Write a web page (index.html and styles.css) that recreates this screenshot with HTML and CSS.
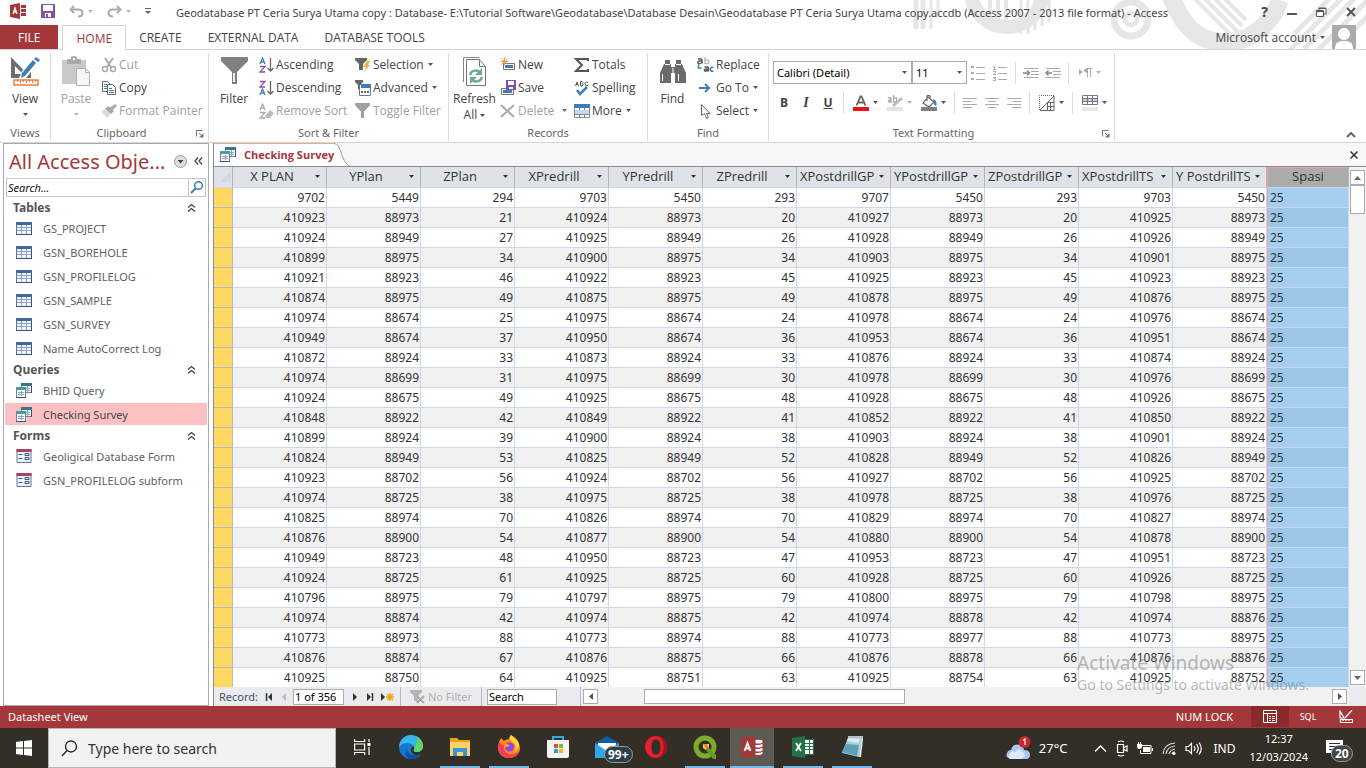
FILE: index.html
```html
<!DOCTYPE html>
<html lang="en">
<head>
  <meta charset="UTF-8">
  <meta name="viewport" content="width=device-width, initial-scale=1.0">
  <title>Geodatabase PT Ceria Surya Utama copy - Access</title>
  <link rel="stylesheet" href="styles.css">
</head>
<body>
  <!-- shared icons -->
  <svg class="sprite" width="0" height="0">
    <symbol id="caret" viewBox="0 0 5 3"><path d="M0 0h5L2.500 3z" fill="currentColor"/></symbol>
    <symbol id="fold" viewBox="0 0 9 9"><path d="M1 4.500l3.500-3 3.500 3M1 8.500l3.500-3 3.500 3" fill="none" stroke="#444" stroke-width="1.300"/></symbol>
    <symbol id="launch" viewBox="0 0 8 8"><path d="M.5 6.500v-6h6M3 3l3 3" fill="none" stroke="#777"/><path d="M7.500 3v4.500H3z" fill="#777"/></symbol>
    <symbol id="funnel" viewBox="0 0 28 28"><path d="M0 0h28v4L17 16v12h-6V16L0 4z" fill="currentColor"/></symbol>
    <symbol id="table" viewBox="0 0 16 13"><path fill="#f4f7fc" stroke="#5b7195" d="M.5.5h15v12H.5z"/><path fill="#41699f" d="M0 0h16v3H0z"/><path stroke="#8ca3c5" d="M1 5.500h14M1 8.500h14M5.500 3v9M10.500 3v9"/><path stroke="#33517c" d="M0 12.500h16M15.500 3v10"/></symbol>
    <symbol id="query" viewBox="0 0 16 15"><path fill="#fff" stroke="#6c8797" d="M5.500.5h10v9h-10z"/><path fill="#39788a" d="M5 0h11v3H5z"/><path stroke="#8fa6bd" d="M7 5.500h7M7 7.500h7M11.500 3v6"/><path fill="#f7fafc" stroke="#6c8797" d="M.5 5.500h9v9h-9z"/><path fill="#4a99a0" d="M0 4h10v3H0z"/><path stroke="#8fa6bd" d="M2 9.500h6M2 11.500h6M5.500 8v5"/><path stroke="#33517c" d="M0 14.500h10M15.500 3v7"/></symbol>
    <symbol id="form" viewBox="0 0 15 14"><path fill="#eef1fb" stroke="#6478a0" d="M.5.5h14v13H.5z"/><path fill="#a8405f" d="M0 0h15v3H0z"/><path stroke="#4a5a85" fill="none" d="M2 5.500h4M2 9.500h4M8.500 4.500h4v2h-4zM8.500 8.500h4v2h-4z"/></symbol>
  </svg>

  <header class="titlebar">
    <svg class="art" width="456" height="49" viewBox="0 0 456 49">
      <g fill="none" stroke="#e6e6e6">
        <path stroke-width="5" d="M6 0v29M13 0v29"/>
        <path stroke-width="3" d="M21 0v29M28 0v18M111 0v34M118 0v34M125 0v30M132 0v26M139 0v22"/>
        <circle cx="97" cy="-9" r="36" stroke-width="14"/>
        <path stroke-width="4" d="M80 0v28M88 0v30M96 0v31"/>
        <circle cx="221" cy="19" r="17" stroke-width="7"/>
        <circle cx="221" cy="19" r="6" stroke-width="5"/>
        <path stroke-width="18" d="M256-16c10 28 22 54 52 58 26 4 52-14 62-42"/>
        <path stroke-width="4" d="M284-2l38 38M294-2l34 34M304-2l28 28M314-2l22 22"/>
        <path stroke-width="5" d="M384 34l40-40M378 52l58-58M394 49l54-54M408 50l50-50M422 52l36-36"/>
      </g>
    </svg>
    <div class="quick">
      <svg width="17" height="16" viewBox="0 0 17 16"><path fill="#a4373a" d="M0 2l10-2v16L0 14z"/><path fill="#a4373a" d="M11 2h5v3h-5zM11 6h5v3h-5zM11 10h5v3h-5z"/><path d="M3 11l2-6 2 6M3.500 9h3" stroke="#fff" stroke-width="1.300" fill="none"/></svg>
      <button aria-label="Save"><svg width="14" height="14" viewBox="0 0 14 14"><path fill="#8652a8" d="M0 0h14v14H0z"/><path fill="#fff" d="M2 1h10v6H2zM4 9h6v4H4z"/><path fill="#8652a8" d="M5 10h2v3H5z"/></svg></button>
      <button class="off" aria-label="Undo"><svg width="15" height="13" viewBox="0 0 15 13"><path d="M5 1L1.500 4.500 5 8M2 4.500h7c6 0 6 7 0 7" fill="none" stroke="#aaa" stroke-width="2"/></svg><svg class="caret"><use href="#caret"/></svg></button>
      <button class="off" aria-label="Redo"><svg width="15" height="13" viewBox="0 0 15 13"><path d="M10 1l3.500 3.500L10 8M13 4.500H6c-6 0-6 7 0 7" fill="none" stroke="#aaa" stroke-width="2"/></svg><svg class="caret"><use href="#caret"/></svg></button>
      <button aria-label="Customize toolbar"><svg width="6" height="7" viewBox="0 0 6 7"><path d="M0 .5h6" stroke="#666"/><path d="M0 3h6L3 6z" fill="#666"/></svg></button>
    </div>
    <h1>Geodatabase PT Ceria Surya Utama copy : Database- E:\Tutorial Software\Geodatabase\Database Desain\Geodatabase PT Ceria Surya Utama copy.accdb (Access 2007 - 2013 file format) - Access</h1>
    <div class="winbtns">
      <button class="help">?</button>
      <button aria-label="Minimize"><svg width="10" height="10" viewBox="0 0 10 10"><path d="M0 7h10" stroke="#555" stroke-width="2"/></svg></button>
      <button aria-label="Restore"><svg width="11" height="10" viewBox="0 0 11 10"><path d="M.5 3.500h7v6h-7zM3 3V1h7v6H8M.5 4.500h7M3 1.500h7" fill="none" stroke="#555"/></svg></button>
      <button aria-label="Close"><svg width="10" height="10" viewBox="0 0 10 10"><path d="M1 1l8 8M9 1L1 9" stroke="#555" stroke-width="2"/></svg></button>
    </div>
  </header>

  <nav class="tabs">
    <a class="file" href="#">FILE</a>
    <a class="active" href="#">HOME</a>
    <a href="#">CREATE</a>
    <a href="#">EXTERNAL DATA</a>
    <a href="#">DATABASE TOOLS</a>
    <button class="account">Microsoft account <svg class="caret"><use href="#caret"/></svg>
      <svg width="24" height="24" viewBox="0 0 24 24"><path fill="#ababab" d="M0 0h24v24H0z"/><circle cx="12" cy="9" r="6" fill="#fff"/><path fill="#fff" d="M3 24c0-6 3-8 9-8s9 2 9 8z"/></svg>
    </button>
  </nav>

  <section class="ribbon">
    <div class="group views">
      <div class="tools">
        <button class="big">
          <svg width="30" height="30" viewBox="0 0 30 30"><path fill="#6d6d6d" fill-rule="evenodd" d="M1 1l20 21H1zM5 10v8h8z"/><path fill="#fff" d="M1 22h8l3-7L26 0h4v6L18 22z"/><path fill="#6d6d6d" d="M1 18h8v4H1zM16 22l5-6v6z"/><path fill="#3f7cb8" d="M23 4l3 3-11 13-4 2 1-5zM24 3l2-2 4 3-2 2z"/><path fill="#fff" stroke="#ed7d31" stroke-width="1.500" d="M4 24h24v5H4z"/><path stroke="#ed7d31" d="M7.500 24v2M10.500 24v3M13.500 24v2M16.500 24v3M19.500 24v2M22.500 24v3M25.500 24v2"/></svg>
          View<svg class="caret"><use href="#caret"/></svg>
        </button>
      </div>
      <p>Views</p>
    </div>

    <div class="group clipboard">
      <div class="tools">
        <button class="big off">
          <svg width="30" height="30" viewBox="0 0 30 30"><path fill="#c9c9c9" d="M1 4h24v24H1z"/><path fill="#aaa" d="M6 3h4V1q3-2 6 0v2h4v5H6z"/><path fill="#fff" d="M12 2h2v2h-2z"/><path fill="#f8f4f8" stroke="#b0b0b0" d="M15.500 12.500h9l4 4v13h-13z"/><path fill="none" stroke="#b0b0b0" d="M24.500 12.500v4h4"/></svg>
          Paste<svg class="caret"><use href="#caret"/></svg>
        </button>
        <div class="stack">
          <button class="off"><svg width="16" height="16" viewBox="0 0 16 16"><g fill="none" stroke="#aaa"><path stroke-width="2" d="M4 1l6 9M12 1L6 10"/><circle cx="4" cy="12" r="2.500" stroke-width="1.500"/><circle cx="12" cy="12" r="2.500" stroke-width="1.500"/></g></svg>Cut</button>
          <button><svg width="16" height="16" viewBox="0 0 16 16"><g fill="#fff" stroke="#666"><path d="M1.500 1.500h5l3 3v7h-8z"/><path d="M6.500 4.500h5l3 3v7h-8z"/></g><path stroke="#3f7cb8" d="M3 4.500h3M3 6.500h3M3 8.500h3M8 8.500h3M8 10.500h5M8 12.500h5"/></svg>Copy</button>
          <button class="off"><svg width="16" height="16" viewBox="0 0 16 16"><path fill="#aaa" d="M14 1l2 2-4 4 1 1-3 3-6-5 3-3 1 1h2z"/><path fill="#ddd" d="M4 6l6 5-4 4-6-6z"/></svg>Format Painter</button>
        </div>
      </div>
      <p>Clipboard<svg class="launch"><use href="#launch"/></svg></p>
    </div>

    <div class="group sort">
      <div class="tools">
        <button class="big"><svg width="28" height="30" viewBox="0 0 28 30"><path fill="#808080" d="M1 1h27v4L17 16v12h-5V16L1 5z"/><path d="M14 17v9" stroke="#eee" stroke-width="2"/></svg>Filter</button>
        <div class="stack first">
          <button><svg width="15" height="16" viewBox="0 0 15 16"><g fill="none" stroke-width="1.300"><path stroke="#3f7cb8" d="M1 7l2.500-6L6 7M2 5h3"/><path stroke="#8652a8" d="M1 9.500h5L1 15h5"/><path stroke="#666" d="M11.500 1v13M8.500 11l3 3 3-3"/></g></svg>Ascending</button>
          <button><svg width="15" height="16" viewBox="0 0 15 16"><g fill="none" stroke-width="1.300"><path stroke="#3f7cb8" d="M1 15l2.500-6L6 15M2 13h3"/><path stroke="#8652a8" d="M1 1.500h5L1 7h5"/><path stroke="#666" d="M11.500 1v13M8.500 11l3 3 3-3"/></g></svg>Descending</button>
          <button class="off"><svg width="15" height="16" viewBox="0 0 15 16"><g fill="none" stroke="#aaa" stroke-width="1.300"><path d="M1 7l2.500-6L6 7M2 5h3M1 9.500h5L1 15h5"/></g><path fill="#bbb" d="M11 7l4 3-4 5H7l-1-2z"/></svg>Remove Sort</button>
        </div>
        <div class="stack">
          <button><svg width="16" height="16" viewBox="0 0 16 16"><path fill="#666" d="M0 1h12v2L8 7v6H4V7L0 3z"/><path fill="#f0b050" d="M12 4h3l-2 4h2l-6 7 2-5H8z"/></svg>Selection<svg class="caret"><use href="#caret"/></svg></button>
          <button><svg width="16" height="16" viewBox="0 0 16 16"><path fill="#fff" stroke="#777" d="M4.500 4.500h11v11h-11z"/><path fill="#3f7cb8" d="M6 4h10v4H6z"/><path fill="#666" d="M0 0h8v2L5 5v4H3V5L0 2z"/><path stroke="#666" stroke-width="2" d="M6 12h2M9 12h2M12 12h2"/></svg>Advanced<svg class="caret"><use href="#caret"/></svg></button>
          <button class="off"><svg width="16" height="16"><use href="#funnel" width="15" height="15"/></svg>Toggle Filter</button>
        </div>
      </div>
      <p>Sort &amp; Filter</p>
    </div>

    <div class="group records">
      <div class="tools">
        <button class="big">
          <svg width="26" height="30" viewBox="0 0 26 30"><path fill="#fff" stroke="#888" d="M1.500 26V1.500h16"/><path fill="#fff" stroke="#777" d="M4.500 3.500h13l6 7v19h-19z"/><path fill="none" stroke="#777" d="M17.500 3.500v7h6"/><g fill="none" stroke="#6aab94" stroke-width="2.500"><path d="M8 19c1-5 8-6 10-2M20 21c-1 5-8 6-10 2"/></g><path fill="#6aab94" d="M20 12v7h-7zM8 28v-7h7z"/></svg>
          Refresh<span>All <svg class="caret"><use href="#caret"/></svg></span>
        </button>
        <div class="stack first">
          <button><svg width="16" height="16" viewBox="0 0 16 16"><path fill="#fff" stroke="#777" d="M3.500 6.500h11v6h-11z"/><path fill="#3f7cb8" d="M5 8h8v3H5z"/><path stroke="#eba44a" d="M4.500 0v8M.5 4.500h8M1.500 1.500l6 6M7.500 1.500l-6 6"/></svg>New</button>
          <button><svg width="16" height="16" viewBox="0 0 16 16"><path fill="#fff" stroke="#777" d="M1.500 8.500h12v6h-12z"/><path fill="#3f7cb8" d="M3 10h9v3H3z"/><path fill="#8652a8" d="M6 0h10v10H6z"/><path fill="#fff" d="M8 1h6v4H8zM9 7h4v2H9z"/></svg>Save</button>
          <button class="off del"><svg width="16" height="16" viewBox="0 0 16 16"><path stroke="#aaa" stroke-width="2" d="M1 2l13 12M14 2L1 14"/></svg>Delete<svg class="caret"><use href="#caret"/></svg></button>
        </div>
        <div class="stack">
          <button><svg width="16" height="16" viewBox="0 0 16 16"><path fill="none" stroke="#555" stroke-width="2" d="M14 4V2H2l6 6-6 6h12v-2"/></svg>Totals</button>
          <button><svg width="16" height="16" viewBox="0 0 16 16"><path fill="none" stroke="#555" d="M1.500 6l1.500-4 1.500 4M2 4.500h2M6.500 6V1.500h1.500q2 1 0 2q2.500 1 0 2.500zM14 2.500q-3-1.500-3 1.200t3 1.800"/><path fill="none" stroke="#3f7cb8" stroke-width="2.500" d="M3 10l3 4 7-7"/></svg>Spelling</button>
          <button><svg width="16" height="16" viewBox="0 0 16 16"><path fill="#fff" stroke="#888" d="M.5 1.500h15v13H.5zM.5 11.500h15M5.500 5v10M10.500 5v10"/><path fill="#3f7cb8" d="M0 1h16v4H0z"/><path fill="#c5d9ee" d="M1 7h14v4H1z"/></svg>More<svg class="caret"><use href="#caret"/></svg></button>
        </div>
      </div>
      <p>Records</p>
    </div>

    <div class="group find">
      <div class="tools">
        <button class="big"><svg width="28" height="30" viewBox="0 0 28 30"><path fill="#6a6a6a" d="M6 4h5v4h1v3h4V8h1V4h5v4h1l4 9v10H16V17h-4v10H1V17l4-9h1z"/><path stroke="#fff" d="M3.500 18v7M19.500 18v7M14 12v5M6 8.500h5M17 8.500h5"/></svg>Find</button>
        <div class="stack">
          <button><svg width="17" height="16" viewBox="0 0 17 16"><g fill="none" stroke-width="1.500"><path stroke="#555" d="M1 2h3q1 0 1 1.500v3M5 4H3Q.5 4 1 6t4-.5M7.500 10h3q1 0 1 1.500v3M11.500 12h-2q-2.500 0-2 1.500t4-.5"/><path stroke="#bbb" d="M8 0v7M8 3q4-1 4 1.500T8 6.500"/><path stroke="#3f7cb8" d="M16.500 10.500q-3-1-3 1.700t3 1.800M1.500 8v3h3"/></g></svg>Replace</button>
          <button><svg width="17" height="16" viewBox="0 0 17 16"><path fill="none" stroke="#3f7cb8" stroke-width="2" d="M2 8h9M8 4l4 4-4 4"/></svg>Go To<svg class="caret"><use href="#caret"/></svg></button>
          <button><svg width="17" height="16" viewBox="0 0 17 16"><path fill="#fff" stroke="#666" d="M4.500 1.500v11l3-2 2 5 2-1-2-4h3.500z"/></svg>Select<svg class="caret"><use href="#caret"/></svg></button>
        </div>
      </div>
      <p>Find</p>
    </div>

    <div class="group text">
      <div class="format">
        <div class="line">
          <select class="font" aria-label="Font"><option>Calibri (Detail)</option></select>
          <select class="size" aria-label="Font size"><option>11</option></select>
          <button aria-label="Bullets"><svg width="14" height="16" viewBox="0 0 14 16"><path stroke="#aaa" stroke-width="2" d="M0 2h3M0 8h3M0 14h3"/><path stroke="#aaa" d="M5 2.500h9M5 8.500h9M5 14.500h9"/></svg></button>
          <button aria-label="Numbering"><svg width="14" height="16" viewBox="0 0 14 16"><path fill="none" stroke="#aaa" d="M5 2.500h9M5 8.500h9M5 14.500h9M0 1.500h1.500V4M0 4.500h3M0 6.500h2.500v1L.5 9.500H3M0 12.500h2.500v3H0M1 13.500h2"/></svg></button>
          <i></i>
          <button aria-label="Decrease indent"><svg width="16" height="12" viewBox="0 0 16 12"><path fill="none" stroke="#aaa" d="M1 1.500h14M8 4.500h8M8 7.500h8M1 10.500h14"/><path fill="none" stroke="#888" stroke-width="1.500" d="M0 6h6M4 3.500L6.500 6 4 8.500"/></svg></button>
          <button aria-label="Increase indent"><svg width="16" height="12" viewBox="0 0 16 12"><path fill="none" stroke="#aaa" d="M1 1.500h14M8 4.500h8M8 7.500h8M1 10.500h14"/><path fill="none" stroke="#888" stroke-width="1.500" d="M1 6h6M3.500 3.500L1 6l2.500 2.500"/></svg></button>
          <i></i>
          <button class="drop off" aria-label="Text direction"><svg width="13" height="10" viewBox="0 0 13 10"><path fill="#aaa" d="M0 1l4 3-4 3z"/><path fill="none" stroke="#aaa" d="M13 .5H7.500v4M8.500 0v9M11.500 0v9"/><circle cx="7" cy="2.500" r="2" fill="#aaa"/></svg><svg class="caret"><use href="#caret"/></svg></button>
        </div>
        <div class="line">
          <button class="glyph"><b>B</b></button>
          <button class="glyph it"><b>I</b></button>
          <button class="glyph"><b><u>U</u></b></button>
          <i></i>
          <button class="drop" aria-label="Font color"><svg width="16" height="16" viewBox="0 0 16 16"><path fill="none" stroke="#666" stroke-width="1.800" d="M3.500 10.500l4-9h1l4 9M5 7.500h6"/><path fill="#f01010" d="M0 12h16v4H0z"/></svg><svg class="caret"><use href="#caret"/></svg></button>
          <button class="drop off" aria-label="Highlight"><svg width="16" height="16" viewBox="0 0 16 16"><path fill="none" stroke="#aaa" stroke-width="1.300" d="M1 3h3v4H2Q0 5 4 5M6.500 0v7h3V3h-3"/><path stroke="#bbb" stroke-width="3" d="M15 3L6 11"/><path fill="#e4e4e4" d="M0 12h16v4H0z"/></svg><svg class="caret"><use href="#caret"/></svg></button>
          <button class="drop" aria-label="Fill color"><svg width="16" height="16" viewBox="0 0 16 16"><path fill="#fff" stroke="#666" stroke-width="1.200" d="M7 2l6 5-5 5-6-4zM6 6V1q1.500-1.500 3 0v3"/><path fill="#3f7cb8" d="M12 4q5 2 3 7-3-1-2-4z"/><path fill="#808080" d="M0 12h16v4H0z"/></svg><svg class="caret"><use href="#caret"/></svg></button>
          <i></i>
          <button aria-label="Align left"><svg width="14" height="12" viewBox="0 0 14 12"><path stroke="#aaa" d="M0 1.500h14M0 4.500h9M0 7.500h14M0 10.500h9"/></svg></button>
          <button aria-label="Center"><svg width="14" height="12" viewBox="0 0 14 12"><path stroke="#aaa" d="M0 1.500h14M3 4.500h8M0 7.500h14M3 10.500h8"/></svg></button>
          <button aria-label="Align right"><svg width="14" height="12" viewBox="0 0 14 12"><path stroke="#aaa" d="M0 1.500h14M5 4.500h9M0 7.500h14M5 10.500h9"/></svg></button>
          <i></i>
          <button class="drop" aria-label="Gridlines"><svg width="16" height="16" viewBox="0 0 16 16"><path fill="none" stroke="#666" stroke-dasharray="1 1" d="M.5 15V.5H15"/><path fill="none" stroke="#666" d="M1 15L15 1v14.500H1M8 11.500h7M8.500 8v7M11.500 8v7M9 7.500h6"/></svg><svg class="caret"><use href="#caret"/></svg></button>
          <i></i>
          <button class="drop" aria-label="Alternate row color"><svg width="16" height="16" viewBox="0 0 16 16"><path fill="#fff" stroke="#777" d="M.5.5h15v9H.5z"/><path fill="#b9d2ec" d="M1 4h14v3H1z"/><path stroke="#777" d="M0 3.500h16M0 6.500h16M5.500 0v10M10.500 0v10"/><path fill="#e8e8e8" d="M0 12h16v4H0z"/></svg><svg class="caret"><use href="#caret"/></svg></button>
        </div>
      </div>
      <p>Text Formatting<svg class="launch"><use href="#launch"/></svg></p>
    </div>
    <button class="collapse" aria-label="Collapse ribbon"><svg width="10" height="6" viewBox="0 0 10 6"><path d="M1 5l4-4 4 4" fill="none" stroke="#666" stroke-width="2"/></svg></button>
  </section>

  <main>
    <aside>
      <div class="panehead">
        <h2>All Access Obje...</h2>
        <button aria-label="Choose category"><svg width="13" height="13" viewBox="0 0 13 13"><circle cx="6.500" cy="6.500" r="6" fill="#dcdfe2" stroke="#999"/><path fill="#444" d="M3.500 5h6l-3 3.500z"/></svg></button>
        <button aria-label="Shutter bar"><svg width="9" height="8" viewBox="0 0 9 8"><path d="M4 .5L1 4l3 3.500M8 .5L5 4l3 3.500" fill="none" stroke="#444" stroke-width="1.300"/></svg></button>
      </div>
      <form class="search">
        <input type="text" aria-label="Search objects" placeholder="Search...">
        <button type="button" aria-label="Search"><svg width="14" height="13" viewBox="0 0 14 13"><circle cx="8.500" cy="4.500" r="3.800" fill="#fff" stroke="#3f7cb8" stroke-width="1.500"/><path d="M5.500 7.500L1 12" stroke="#3f7cb8" stroke-width="2"/></svg></button>
      </form>
      <h3>Tables<svg width="9" height="9"><use href="#fold"/></svg></h3>
      <ul>
        <li><a href="#"><svg width="16" height="13"><use href="#table"/></svg>GS_PROJECT</a></li>
        <li><a href="#"><svg width="16" height="13"><use href="#table"/></svg>GSN_BOREHOLE</a></li>
        <li><a href="#"><svg width="16" height="13"><use href="#table"/></svg>GSN_PROFILELOG</a></li>
        <li><a href="#"><svg width="16" height="13"><use href="#table"/></svg>GSN_SAMPLE</a></li>
        <li><a href="#"><svg width="16" height="13"><use href="#table"/></svg>GSN_SURVEY</a></li>
        <li><a href="#"><svg width="16" height="13"><use href="#table"/></svg>Name AutoCorrect Log</a></li>
      </ul>
      <h3>Queries<svg width="9" height="9"><use href="#fold"/></svg></h3>
      <ul>
        <li><a href="#"><svg width="16" height="15"><use href="#query"/></svg>BHID Query</a></li>
        <li><a class="active" href="#"><svg width="16" height="15"><use href="#query"/></svg>Checking Survey</a></li>
      </ul>
      <h3>Forms<svg width="9" height="9"><use href="#fold"/></svg></h3>
      <ul>
        <li><a href="#"><svg width="16" height="14"><use href="#form"/></svg>Geoligical Database Form</a></li>
        <li><a href="#"><svg width="16" height="14"><use href="#form"/></svg>GSN_PROFILELOG subform</a></li>
      </ul>
    </aside>

    <section class="doc">
      <div class="doctabs">
        <a href="#"><svg width="16" height="15"><use href="#query"/></svg>Checking Survey</a>
        <svg class="edge" width="16" height="23" viewBox="0 0 16 23"><path d="M0 0c8 0 6 18 16 23H0z" fill="#fff"/><path d="M0 .5c8 0 6 18 16 23" fill="none" stroke="#a09488"/></svg>
        <button aria-label="Close Checking Survey"><svg width="8" height="8" viewBox="0 0 8 8"><path d="M.5.5l7 7M7.500.5l-7 7" stroke="#333" stroke-width="1.500"/></svg></button>
      </div>
      <div class="sheet">
        <div class="grid">
          <table>
            <colgroup><col class="gutter"><col span="11" class="num"><col></colgroup>
            <thead>
              <tr>
                <th><svg width="11" height="11" viewBox="0 0 11 11"><path d="M11 0v11H0z" fill="#cfdae3"/></svg></th>
                <th><div><span>X PLAN</span><button aria-label="Filter X PLAN"><svg class="caret"><use href="#caret"/></svg></button></div></th>
                <th><div><span>YPlan</span><button aria-label="Filter YPlan"><svg class="caret"><use href="#caret"/></svg></button></div></th>
                <th><div><span>ZPlan</span><button aria-label="Filter ZPlan"><svg class="caret"><use href="#caret"/></svg></button></div></th>
                <th><div><span>XPredrill</span><button aria-label="Filter XPredrill"><svg class="caret"><use href="#caret"/></svg></button></div></th>
                <th><div><span>YPredrill</span><button aria-label="Filter YPredrill"><svg class="caret"><use href="#caret"/></svg></button></div></th>
                <th><div><span>ZPredrill</span><button aria-label="Filter ZPredrill"><svg class="caret"><use href="#caret"/></svg></button></div></th>
                <th><div><span class="cut">XPostdrillGP</span><button aria-label="Filter XPostdrillGP"><svg class="caret"><use href="#caret"/></svg></button></div></th>
                <th><div><span class="cut">YPostdrillGP</span><button aria-label="Filter YPostdrillGP"><svg class="caret"><use href="#caret"/></svg></button></div></th>
                <th><div><span class="cut">ZPostdrillGP</span><button aria-label="Filter ZPostdrillGP"><svg class="caret"><use href="#caret"/></svg></button></div></th>
                <th><div><span class="cut">XPostdrillTS</span><button aria-label="Filter XPostdrillTS"><svg class="caret"><use href="#caret"/></svg></button></div></th>
                <th><div><span class="cut">Y PostdrillTS</span><button aria-label="Filter Y PostdrillTS"><svg class="caret"><use href="#caret"/></svg></button></div></th>
                <th>Spasi</th>
              </tr>
            </thead>
            <tbody>
              <tr><td></td><td>9702</td><td>5449</td><td>294</td><td>9703</td><td>5450</td><td>293</td><td>9707</td><td>5450</td><td>293</td><td>9703</td><td>5450</td><td>25</td></tr>
              <tr><td></td><td>410923</td><td>88973</td><td>21</td><td>410924</td><td>88973</td><td>20</td><td>410927</td><td>88973</td><td>20</td><td>410925</td><td>88973</td><td>25</td></tr>
              <tr><td></td><td>410924</td><td>88949</td><td>27</td><td>410925</td><td>88949</td><td>26</td><td>410928</td><td>88949</td><td>26</td><td>410926</td><td>88949</td><td>25</td></tr>
              <tr><td></td><td>410899</td><td>88975</td><td>34</td><td>410900</td><td>88975</td><td>34</td><td>410903</td><td>88975</td><td>34</td><td>410901</td><td>88975</td><td>25</td></tr>
              <tr><td></td><td>410921</td><td>88923</td><td>46</td><td>410922</td><td>88923</td><td>45</td><td>410925</td><td>88923</td><td>45</td><td>410923</td><td>88923</td><td>25</td></tr>
              <tr><td></td><td>410874</td><td>88975</td><td>49</td><td>410875</td><td>88975</td><td>49</td><td>410878</td><td>88975</td><td>49</td><td>410876</td><td>88975</td><td>25</td></tr>
              <tr><td></td><td>410974</td><td>88674</td><td>25</td><td>410975</td><td>88674</td><td>24</td><td>410978</td><td>88674</td><td>24</td><td>410976</td><td>88674</td><td>25</td></tr>
              <tr><td></td><td>410949</td><td>88674</td><td>37</td><td>410950</td><td>88674</td><td>36</td><td>410953</td><td>88674</td><td>36</td><td>410951</td><td>88674</td><td>25</td></tr>
              <tr><td></td><td>410872</td><td>88924</td><td>33</td><td>410873</td><td>88924</td><td>33</td><td>410876</td><td>88924</td><td>33</td><td>410874</td><td>88924</td><td>25</td></tr>
              <tr><td></td><td>410974</td><td>88699</td><td>31</td><td>410975</td><td>88699</td><td>30</td><td>410978</td><td>88699</td><td>30</td><td>410976</td><td>88699</td><td>25</td></tr>
              <tr><td></td><td>410924</td><td>88675</td><td>49</td><td>410925</td><td>88675</td><td>48</td><td>410928</td><td>88675</td><td>48</td><td>410926</td><td>88675</td><td>25</td></tr>
              <tr><td></td><td>410848</td><td>88922</td><td>42</td><td>410849</td><td>88922</td><td>41</td><td>410852</td><td>88922</td><td>41</td><td>410850</td><td>88922</td><td>25</td></tr>
              <tr><td></td><td>410899</td><td>88924</td><td>39</td><td>410900</td><td>88924</td><td>38</td><td>410903</td><td>88924</td><td>38</td><td>410901</td><td>88924</td><td>25</td></tr>
              <tr><td></td><td>410824</td><td>88949</td><td>53</td><td>410825</td><td>88949</td><td>52</td><td>410828</td><td>88949</td><td>52</td><td>410826</td><td>88949</td><td>25</td></tr>
              <tr><td></td><td>410923</td><td>88702</td><td>56</td><td>410924</td><td>88702</td><td>56</td><td>410927</td><td>88702</td><td>56</td><td>410925</td><td>88702</td><td>25</td></tr>
              <tr><td></td><td>410974</td><td>88725</td><td>38</td><td>410975</td><td>88725</td><td>38</td><td>410978</td><td>88725</td><td>38</td><td>410976</td><td>88725</td><td>25</td></tr>
              <tr><td></td><td>410825</td><td>88974</td><td>70</td><td>410826</td><td>88974</td><td>70</td><td>410829</td><td>88974</td><td>70</td><td>410827</td><td>88974</td><td>25</td></tr>
              <tr><td></td><td>410876</td><td>88900</td><td>54</td><td>410877</td><td>88900</td><td>54</td><td>410880</td><td>88900</td><td>54</td><td>410878</td><td>88900</td><td>25</td></tr>
              <tr><td></td><td>410949</td><td>88723</td><td>48</td><td>410950</td><td>88723</td><td>47</td><td>410953</td><td>88723</td><td>47</td><td>410951</td><td>88723</td><td>25</td></tr>
              <tr><td></td><td>410924</td><td>88725</td><td>61</td><td>410925</td><td>88725</td><td>60</td><td>410928</td><td>88725</td><td>60</td><td>410926</td><td>88725</td><td>25</td></tr>
              <tr><td></td><td>410796</td><td>88975</td><td>79</td><td>410797</td><td>88975</td><td>79</td><td>410800</td><td>88975</td><td>79</td><td>410798</td><td>88975</td><td>25</td></tr>
              <tr><td></td><td>410974</td><td>88874</td><td>42</td><td>410974</td><td>88875</td><td>42</td><td>410974</td><td>88878</td><td>42</td><td>410974</td><td>88876</td><td>25</td></tr>
              <tr><td></td><td>410773</td><td>88973</td><td>88</td><td>410773</td><td>88974</td><td>88</td><td>410773</td><td>88977</td><td>88</td><td>410773</td><td>88975</td><td>25</td></tr>
              <tr><td></td><td>410876</td><td>88874</td><td>67</td><td>410876</td><td>88875</td><td>66</td><td>410876</td><td>88878</td><td>66</td><td>410876</td><td>88876</td><td>25</td></tr>
              <tr><td></td><td>410925</td><td>88750</td><td>64</td><td>410925</td><td>88751</td><td>63</td><td>410925</td><td>88754</td><td>63</td><td>410925</td><td>88752</td><td>25</td></tr>
            </tbody>
          </table>
        </div>
        <div class="vscroll">
          <button aria-label="Scroll up"><svg width="7" height="4" viewBox="0 0 7 4"><path d="M0 4h7L3.500 0z" fill="#666"/></svg></button>
          <div class="thumb"></div>
          <button aria-label="Scroll down"><svg width="7" height="4" viewBox="0 0 7 4"><path d="M0 0h7L3.500 4z" fill="#666"/></svg></button>
        </div>
      </div>
      <div class="recnav">
        <div class="record">
          <label for="rec">Record:</label>
          <button aria-label="First"><svg width="8" height="8" viewBox="0 0 8 8"><path d="M1.500 0v8" stroke="#333" stroke-width="1.500"/><path d="M7 0v8L3 4z" fill="#333"/></svg></button>
          <button aria-label="Previous"><svg width="8" height="8" viewBox="0 0 8 8"><path d="M6 0v8L2 4z" fill="#bbb"/></svg></button>
          <input id="rec" type="text" value="1 of 356">
          <button class="next" aria-label="Next"><svg width="8" height="8" viewBox="0 0 8 8"><path d="M2 0v8l4-4z" fill="#333"/></svg></button>
          <button aria-label="Last"><svg width="8" height="8" viewBox="0 0 8 8"><path d="M1 0v8l4-4z" fill="#333"/><path d="M6.500 0v8" stroke="#333" stroke-width="1.500"/></svg></button>
          <button aria-label="New record"><svg width="13" height="8" viewBox="0 0 13 8"><path d="M0 0v8l4-4z" fill="#333"/><path d="M9 0v8M5 4h8M6 1l6 6M12 1L6 7" stroke="#e9a820" stroke-width="1.500"/></svg></button>
        </div>
        <button class="nofilter" disabled><svg width="15" height="14" viewBox="0 0 15 14"><path fill="#b5b5b5" d="M0 0h12v2L8 6v7L4 10V6L0 2z"/><path stroke="#aaa" stroke-width="2" d="M7 6l7 7M14 6l-7 7"/></svg>No Filter</button>
        <div class="find-in"><input type="text" value="Search" aria-label="Search records"></div>
        <div class="hscroll">
          <button aria-label="Scroll left"><svg width="4" height="7" viewBox="0 0 4 7"><path d="M4 0v7L0 3.500z" fill="#555"/></svg></button>
          <div class="track"><div class="thumb"></div></div>
          <button aria-label="Scroll right"><svg width="4" height="7" viewBox="0 0 4 7"><path d="M0 0v7l4-3.500z" fill="#555"/></svg></button>
        </div>
      </div>
    </section>
    <div class="watermark"><strong>Activate Windows</strong><span>Go to Settings to activate Windows.</span></div>
  </main>

  <div class="status">
    <span>Datasheet View</span>
    <span class="numlock">NUM LOCK</span>
    <button class="active" aria-label="Datasheet view"><svg width="14" height="13" viewBox="0 0 14 13"><path d="M.5.5h13v12H.5zM0 3.500h14M4.500 3v10M6 6.500h2M9 6.500h3M6 8.500h2M9 8.500h3M6 10.500h2M9 10.500h3" fill="none" stroke="#fff"/></svg></button>
    <button class="sql">SQL</button>
    <button aria-label="Design view"><svg width="14" height="13" viewBox="0 0 14 13"><path d="M1 1v7h4zM13 0L6 8M1.500 9.500h12v3h-12zM4 10v1M7 10v1M10 10v1" fill="none" stroke="#fff" stroke-width="1.200"/></svg></button>
  </div>

  <footer>
    <button class="start" aria-label="Start"><svg width="16" height="16" viewBox="0 0 16 16"><path fill="#fff" d="M0 2l7-1v6.500H0zM8 1l8-1v7.500H8zM0 8.500h7V15l-7-1zM8 8.500h8V16l-8-1z"/></svg></button>
    <label class="tasksearch"><svg width="17" height="17" viewBox="0 0 17 17"><circle cx="10" cy="6.500" r="5.500" fill="none" stroke="#222" stroke-width="1.300"/><path d="M6 10.500L1 16" stroke="#222" stroke-width="1.300"/></svg><input type="text" placeholder="Type here to search"></label>
    <div class="apps">
      <button aria-label="Task view"><svg width="17" height="16" viewBox="0 0 17 16"><path d="M.6 0v2.500h10V0M.6 5h10v6H.6zM.6 16v-2.500h10V16M15 0v3M15 8v8" fill="none" stroke="#fff" stroke-width="1.200"/><path d="M13.500 4h3v3h-3z" fill="#fff"/></svg></button>
      <button aria-label="Edge"><svg width="24" height="24" viewBox="0 0 24 24"><path fill="#1878d0" d="M12 0a12 12 0 100 24c5 0 8-2 10-5-4 2-10 1-10-4 0-2 1-3 2-4z"/><path fill="#35b8e8" d="M0 12C1 4 6 0 12 0c7 0 12 5 12 11 0 4-3 6-6 6-3 0-4-1-3-3 1-6-10-9-15-2z"/><path fill="#5ed568" d="M17 1c4 2 7 6 7 10 0 4-3 6-6 6-3 0-4-1-3-3 2-4 5-8 2-13z"/><path fill="#0d4f9e" d="M8 14c0 5 6 8 14 5-3 4-7 5-10 5-5-1-7-6-4-10z"/></svg></button>
      <button class="open" aria-label="File Explorer"><svg width="22" height="20" viewBox="0 0 22 20"><path fill="#e8a317" d="M1 1h7l2 2h11v5H1z"/><path fill="#fcd367" d="M1 5h20v14H1z"/><path fill="#3b93dc" d="M4 11h14v8h-4v-4H8v4H4z"/></svg></button>
      <button class="open" aria-label="Firefox"><svg width="24" height="24" viewBox="0 0 24 24"><path fill="#ff8a1e" d="M1 12C1 8 3 5 4 3l3 3c1-1 3-2 5-2 0-2 1-3 2-4 2 3 9 6 9 13 0 6-5 10-11 10S1 19 1 12z"/><path fill="#ffd43e" d="M14 0c-1 2-2 4 0 6 4 2 6 5 4 11 6-5 6-11-4-17z"/><path fill="#f43d58" d="M1 12c0 6 5 11 11 11 5 0 9-3 11-8-5 6-12 5-15 1-2-3-1-5 0-6-3 0-5-1-5-3-1 1-2 3-2 5z"/><circle cx="12.500" cy="12" r="4.500" fill="#8f45e0"/><path fill="#ff9a28" d="M6 9c3-1 5 0 7 2-2 0-3 2-5 1z"/></svg></button>
      <button aria-label="Store"><svg width="24" height="24" viewBox="0 0 24 24"><path fill="none" stroke="#35a8dc" stroke-width="2" d="M7 6V2h10v4"/><path fill="#f4f4f4" d="M1 5h22v16q0 2-2 2H3q-2 0-2-2z"/><path fill="#e8502c" d="M8 9h4v4H8z"/><path fill="#7eb928" d="M13 9h4v4h-4z"/><path fill="#28a0e4" d="M8 14h4v4H8z"/><path fill="#f8b818" d="M13 14h4v4h-4z"/></svg></button>
      <button aria-label="Mail"><svg width="24" height="22" viewBox="0 0 24 22"><path fill="#0f5da8" d="M0 7l12-7 12 7v14H0z"/><path fill="#fff" d="M3 7h18v9H3z"/><path fill="#30a5e8" d="M0 7l12 8 12-8v15H0z"/></svg><em>99+</em></button>
      <button aria-label="Opera"><svg width="24" height="24" viewBox="0 0 24 24"><path fill="#e3202c" fill-rule="evenodd" d="M12 1a11 11 0 100 22 11 11 0 000-22zM12 4.500c3 0 4.500 3 4.500 7.500S15 19.500 12 19.500 7.500 17 7.500 12 9 4.500 12 4.500z"/><path fill="#a80e1c" d="M14 1.200c5 1 9 5.300 9 10.800s-4 10-9 10.800c4-2 5.500-5.800 5.500-10.800S18 3.200 14 1.200z"/></svg></button>
      <button class="open" aria-label="QGIS"><svg width="24" height="24" viewBox="0 0 24 24"><circle cx="12" cy="12" r="9" fill="none" stroke="#7fab2c" stroke-width="5"/><path fill="#f5d33a" d="M10 9h6v3l-3 3-3-2z"/><path fill="#ee8332" d="M10 9l4 6 2-2-2-4z"/><path fill="#6a9a28" d="M15 12l8 8v4h-3l-7-9z"/></svg></button>
      <button class="open current" aria-label="Access"><svg width="24" height="22" viewBox="0 0 24 22"><path fill="#a4373a" d="M1 2l13-2v22L1 20z"/><path fill="#fff" stroke="#a4373a" d="M15 3.500q8-1 8 1.500v13q-2 2-8 1.500z"/><path fill="none" stroke="#a4373a" stroke-width="1.500" d="M15 8q5 1 8-1M15 12q5 1 8-1M15 16q5 1 8-1"/><path d="M4.500 15l3-8 3 8M5.500 12.500h4" stroke="#fff" stroke-width="1.800" fill="none"/></svg></button>
      <button class="open" aria-label="Excel"><svg width="24" height="22" viewBox="0 0 24 22"><path fill="#fff" stroke="#217346" d="M13 3.500h9.500v15H13z"/><path stroke="#217346" d="M13 7.500h9M13 10.500h9M13 13.500h9M18.500 4v14"/><path fill="#217346" d="M1 2l13-2v22L1 20z"/><path d="M5 7l5 8M10 7l-5 8" stroke="#fff" stroke-width="1.800"/></svg></button>
      <button class="open" aria-label="Notepad"><svg width="24" height="24" viewBox="0 0 24 24"><path fill="#a9cfdf" d="M8 3h15l-4 19-17-4z"/><path fill="#5f9fb8" d="M6 9l13 1-2 11-15-4z"/><path fill="#dcebf2" d="M8 3l12 1-2 4L7 6z"/><path stroke="#e9eef0" stroke-width="1.500" d="M8 2h15"/><path fill="#e8e8e8" d="M22 3l1 1-2 18h-2z"/></svg></button>
    </div>
    <div class="tray">
      <button class="weather"><svg width="25" height="24" viewBox="0 0 25 24"><path fill="#a8c6f0" d="M4 23q-5-2-3-6 1-3 4-3 2-7 9-5 4 2 4 5 6 0 6 5 0 4-4 4z"/><path fill="#dce9fb" d="M4 17q2-3 5-1 2-4 6-2 3 2 4 6l-4 3H4q-3-3 0-6z"/><circle cx="18.500" cy="6" r="6" fill="#c8262a"/><path d="M17 4.500l2-1.500v6" fill="none" stroke="#fff" stroke-width="1.200"/></svg>27°C</button>
      <button aria-label="Hidden icons"><svg width="13" height="7" viewBox="0 0 13 7"><path d="M1 6.500L6.500 1 12 6.500" fill="none" stroke="#fff" stroke-width="1.300"/></svg></button>
      <button aria-label="Meet now"><svg width="12" height="17" viewBox="0 0 12 17"><path d="M1.500 4.500h6v8h-6zM8 7.500l3-1.500v5L8 9.500M2 2q3-2 6 0M2 15q3 2 6 0" fill="none" stroke="#fff" stroke-width="1.200"/></svg></button>
      <button aria-label="Battery"><svg width="16" height="13" viewBox="0 0 16 13"><path d="M5 3.500h9v8H3.500V8M15.500 6v3" fill="none" stroke="#fff"/><path fill="#fff" d="M6 5h7v5H6zM0 2h5v3q0 2-2.500 2T0 5z"/><path d="M1.500 0v2M3.500 0v2" stroke="#fff"/></svg></button>
      <button aria-label="Network"><svg width="14" height="13" viewBox="0 0 14 13"><g fill="none" stroke="#ddd" stroke-width="1.200"><path d="M1 12Q2 2 13 1M4 12q1-7 9-8M7 12q1-4 6-5M10 12q0-2 3-2"/></g><circle cx="12" cy="11.500" r="1.500" fill="#fff"/></svg></button>
      <button aria-label="Volume"><svg width="17" height="13" viewBox="0 0 17 13"><path d="M1 4.500h2.500l3-3v10l-3-3H1zM9 4q2 2.500 0 5M11.500 2q3.500 4.500 0 9M14 .5q4.500 6 0 12" fill="none" stroke="#fff" stroke-width="1.200"/></svg></button>
      <button class="lang">IND</button>
      <time>12:37<br>12/03/2024</time>
      <button class="notes" aria-label="Notifications"><svg width="17" height="16" viewBox="0 0 17 16"><path fill="#fff" d="M0 0h17v13H9l-4 3v-3H0z"/><path stroke="#333" d="M3 3.500h11M3 6.500h11M3 9.500h8"/></svg><em>20</em></button>
    </div>
  </footer>
</body>
</html>
```
FILE: styles.css
```css
* {
  box-sizing: border-box;
}

body {
  margin: 0;
  height: 100vh;
  display: flex;
  flex-direction: column;
  overflow: hidden;
  position: relative;
  font-family: "Noto Sans", "Open Sans", sans-serif;
  font-size: 12px;
  color: #444;
  background: #fff;
}

h1, h2, h3, p, ul {
  margin: 0;
  padding: 0;
  font-weight: normal;
}

button {
  display: flex;
  align-items: center;
  padding: 0;
  border: none;
  background: none;
  font: inherit;
  color: inherit;
  white-space: nowrap;
}

a {
  color: inherit;
  text-decoration: none;
}

svg {
  flex: none;
}

input {
  font: inherit;
  min-width: 0;
}

.sprite {
  position: absolute;
}

.caret {
  width: 5px;
  height: 3px;
  margin-left: 4px;
  color: #555;
}

.off {
  color: #a0a0a0;
}

.off .caret {
  color: #b5b5b5;
}

/* title bar */
.titlebar {
  display: flex;
  align-items: center;
  height: 25px;
}

.art {
  position: absolute;
  top: 0;
  right: 0;
  z-index: -1;
}

.quick {
  display: flex;
  align-items: center;
  gap: 14px;
  width: 176px;
  padding: 0 0 3px 10px;
}

.titlebar h1 {
  flex: 1;
  font-size: 11px;
  white-space: nowrap;
}

.winbtns {
  display: flex;
  gap: 19px;
  padding: 0 10px 2px 0;
}

.help {
  font-size: 14px;
  font-weight: bold;
  line-height: 20px;
}

/* ribbon tabs */
.tabs {
  display: flex;
  height: 25px;
  border-bottom: 1px solid #d5d5d5;
  font-family: "Open Sans", sans-serif;
}

.tabs a {
  display: flex;
  align-items: center;
  padding: 0 13px;
}

.tabs .file {
  padding: 0 18px;
  margin-right: 4px;
  background: #a4373a;
  color: #fff;
}

.tabs .active {
  height: 25px;
  border: 1px solid #d5d5d5;
  border-bottom: none;
  background: #fff;
  color: #a4373a;
}

.account {
  margin-left: auto;
  padding-right: 10px;
}

.account .caret {
  margin-right: 7px;
}

/* ribbon */
.ribbon {
  display: flex;
  height: 93px;
  padding-top: 3px;
  border-bottom: 1px solid #d5d5d5;
  font-family: "Open Sans", sans-serif;
}

.group {
  display: flex;
  flex-direction: column;
  flex: none;
  position: relative;
  height: 88px;
  border-right: 1px solid #dcdcdc;
}

.group p {
  line-height: 16px;
  margin-top: auto;
  font-family: "Noto Sans", sans-serif;
  font-size: 11px;
  text-align: center;
  color: #666;
}

.views { width: 51px; }
.clipboard { width: 158px; }
.sort { width: 240px; }
.records { width: 199px; }
.find { width: 121px; }
.text { width: 346px; }

.clipboard p,
.text p {
  padding-right: 16px;
}

.tools {
  display: flex;
  height: 69px;
}

.big {
  flex-direction: column;
  width: 50px;
  line-height: 16px;
}

.big > svg:first-child {
  margin: 3px 0 5px;
}

.big > .caret {
  margin: 6px 0 0;
}

.big .caret {
  display: inline-block;
  vertical-align: middle;
  margin-left: 0;
}

.stack button {
  height: 23px;
}

.stack button > svg:first-child {
  margin-right: 2px;
}

.stack.first {
  width: 96px;
}

.records .stack.first {
  width: 74px;
}

.del .caret {
  margin-left: 8px;
  color: #666;
}

.records .big {
  width: 51px;
}

.find .big {
  width: 49px;
}

.launch {
  position: absolute;
  right: 4px;
  bottom: 3px;
  width: 8px;
  height: 8px;
}

.format {
  padding: 8px 0 0 4px;
}

.line {
  display: flex;
  align-items: center;
  height: 23px;
  margin-bottom: 7px;
}

.line > button {
  justify-content: center;
  width: 22px;
}

.line > .drop {
  width: 34px;
}

.line i {
  width: 1px;
  height: 22px;
  margin: 0 4px;
  background: #dcdcdc;
}

.line select {
  appearance: none;
  height: 23px;
  padding: 0 3px;
  border: 1px solid #ababab;
  border-radius: 0;
  background: #fff url("data:image/svg+xml,%3Csvg xmlns='http://www.w3.org/2000/svg' width='5' height='3'%3E%3Cpath d='M0 0h5L2.5 3z' fill='%23555'/%3E%3C/svg%3E") no-repeat right 4px center;
  font-family: "Noto Sans", sans-serif;
  font-size: 11px;
  color: #000;
}

.line .font {
  width: 139px;
}

.line .size {
  width: 55px;
}

.glyph {
  font-size: 12px;
}

.it {
  font-family: "Liberation Serif", serif;
  font-size: 14px;
  font-style: italic;
}

.collapse {
  margin: auto 10px 4px auto;
}

/* workspace */
main {
  flex: 1;
  display: flex;
  min-height: 0;
  position: relative;
  padding-left: 3px;
}

aside {
  flex: none;
  width: 206px;
  margin-right: 4px;
  border: 1px solid #a5a9b2;
  font-size: 11px;
}

.panehead {
  display: flex;
  align-items: center;
  height: 34px;
  padding: 0 5px;
}

.panehead h2 {
  flex: 1;
  font-size: 20px;
  white-space: nowrap;
  color: #a4373a;
}

.panehead button {
  margin-left: 7px;
}

.search {
  display: flex;
  height: 19px;
  margin: 0 2px 1px;
  border: 1px solid #c8c8c8;
}

.search input {
  flex: 1;
  padding: 0 1px;
  border: none;
  font-family: "Open Sans", sans-serif;
}

.search input::placeholder {
  color: #000;
  font-style: italic;
}

.search button {
  padding: 0 1px;
  border-left: 1px solid #c8c8c8;
}

aside h3 {
  display: flex;
  justify-content: space-between;
  align-items: center;
  height: 18px;
  padding: 0 12px 0 9px;
  font-size: 12px;
  font-weight: bold;
  color: #555;
}

aside ul {
  list-style: none;
}

aside li {
  padding: 1px;
}

aside li a {
  display: flex;
  align-items: center;
  gap: 11px;
  height: 22px;
  padding-left: 11px;
  color: #606060;
}

aside li .active {
  background: #fdc0c2;
  color: #444;
}

.doc {
  flex: 1;
  display: flex;
  flex-direction: column;
  min-width: 0;
  border-left: 1px solid #8a8f98;
}

.doctabs {
  display: flex;
  height: 24px;
  border-bottom: 1px solid #868b93;
  background: #f7f7f7;
}

.doctabs a {
  display: flex;
  align-items: center;
  gap: 8px;
  padding: 0 0 1px 6px;
  border-top: 1px solid #d8b48c;
  background: #fff;
  font-family: "Open Sans", sans-serif;
  font-size: 11px;
  font-weight: bold;
  color: #a4373a;
}

.doctabs button {
  margin-left: auto;
  padding-right: 8px;
}

.sheet {
  flex: 1;
  display: flex;
  min-height: 0;
}

.grid {
  flex: 1;
  overflow: hidden;
}

table {
  width: 100%;
  table-layout: fixed;
  border-collapse: separate;
  border-spacing: 0;
  font-size: 12px;
  color: #333;
}

.gutter {
  width: 19px;
}

.num {
  width: 94px;
}

th, td {
  height: 20px;
  padding: 0 1px;
  line-height: 19px;
  border-right: 1px solid #cfd6e8;
  border-bottom: 1px solid #cfd6e8;
  text-align: right;
}

th {
  height: 21px;
  padding-bottom: 2px;
  background: #dfe3e8;
  border-right-color: #b0b5bd;
  font-family: "Open Sans", sans-serif;
  font-size: 13px;
  font-weight: normal;
  line-height: 17px;
  text-align: center;
}

th:first-child > svg {
  display: block;
  margin-left: auto;
}

th div {
  display: flex;
  align-items: center;
}

th span {
  flex: 1;
  overflow: hidden;
  white-space: nowrap;
}

th .cut {
  padding-left: 2px;
  text-align: left;
}

th button {
  justify-content: center;
  width: 15px;
}

th .caret {
  margin: 0;
  color: #333;
}

tbody tr:nth-child(even) {
  background: #f1f1f1;
}

td:first-child {
  background: #ffd95f;
  border-color: #b3b9c6;
}

th:last-child {
  border-top: 1px solid #f0a0a0;
  border-left: 1px solid #f0a0a0;
  background: #ababab;
}

td:last-child {
  padding-left: 2px;
  border-left: 1px solid #f0a0a0;
  background: #a5cff0;
  text-align: left;
}

tr:nth-child(even) td:last-child {
  background: #9cc6e8;
}

/* scroll bars */
.vscroll {
  display: flex;
  flex-direction: column;
  width: 17px;
  padding: 3px 1px 2px;
  background: #f1f1f1;
}

.vscroll button,
.hscroll button {
  justify-content: center;
  flex: none;
  width: 15px;
  height: 15px;
  border: 1px solid #ababab;
  background: #fff;
}

.thumb {
  border: 1px solid #ababab;
  background: #fff;
}

.vscroll .thumb {
  height: 29px;
  margin-bottom: auto;
}

.recnav {
  display: flex;
  height: 19px;
  background: #e9ebef;
  font-size: 11px;
}

.recnav input {
  height: 16px;
  padding: 0 1px;
  border: 1px solid #ababab;
  background: #fff;
  color: #000;
}

.record {
  display: flex;
  align-items: center;
  width: 187px;
  padding-left: 5px;
  border-right: 1px solid #b5b8be;
  color: #44546a;
}

.record button {
  margin-left: 7px;
}

.record input {
  width: 51px;
  margin-left: 5px;
}

.nofilter {
  gap: 3px;
  width: 81px;
  padding-left: 9px;
  border-right: 1px solid #b5b8be;
  color: #b0b0b0;
}

.find-in {
  display: flex;
  align-items: center;
  width: 98px;
  padding-left: 5px;
}

.find-in input {
  width: 70px;
}

.hscroll {
  flex: 1;
  display: flex;
  align-items: center;
  margin-right: 17px;
  padding: 0 2px;
  border-left: 1px solid #b5b8be;
  background: #f1f1f1;
}

.track {
  flex: 1;
  padding-left: 6%;
}

.hscroll .thumb {
  width: 38%;
  height: 15px;
}

.watermark {
  position: absolute;
  right: 57px;
  bottom: 11px;
  display: flex;
  flex-direction: column;
  color: rgba(125, 125, 125, 0.55);
  pointer-events: none;
}

.watermark strong {
  font-size: 19px;
  font-weight: normal;
  line-height: 24px;
}

.watermark span {
  font-size: 14px;
  line-height: 20px;
}

/* status bar */
.status {
  display: flex;
  align-items: center;
  height: 22px;
  padding: 0 1px 2px 8px;
  background: #a4373a;
  color: #fff;
  font-size: 11px;
}

.numlock {
  margin: 0 18px 0 auto;
}

.status button {
  justify-content: center;
  width: 38px;
  height: 22px;
}

.status .active {
  background: #8b2a2d;
}

.status .sql {
  font-size: 9px;
}

/* taskbar */
footer {
  display: flex;
  height: 40px;
  background: #342f26;
  color: #fff;
}

.start {
  justify-content: center;
  width: 48px;
}

.tasksearch {
  display: flex;
  align-items: center;
  gap: 10px;
  width: 288px;
  padding-left: 12px;
  border: 1px solid #b8b8b8;
  background: #f2f2f2;
}

.tasksearch input {
  flex: 1;
  padding: 0;
  border: none;
  background: none;
  font-size: 14px;
}

.tasksearch input::placeholder {
  color: #333;
}

.apps {
  display: flex;
  gap: 9px;
  padding-left: 6px;
}

.apps button {
  justify-content: center;
  position: relative;
  width: 40px;
  border-bottom: 2px solid transparent;
}

.apps .open {
  border-color: #76b9ed;
}

.apps .current {
  width: 44px;
  margin: 0 0 0 -4px;
  background: #5d5a53;
}

footer em {
  position: absolute;
  padding: 0 3px;
  border: 1px solid #999;
  border-radius: 9px;
  background: #2b3f4d;
  font-size: 12px;
  font-style: normal;
  font-weight: bold;
  line-height: 15px;
}

.apps em {
  left: 17px;
  top: 18px;
}

.tray {
  display: flex;
  align-items: center;
  gap: 9px;
  margin-left: auto;
  padding-right: 15px;
}

.weather {
  gap: 8px;
  margin-right: 17px;
  font-size: 13px;
}

.lang {
  margin-left: 3px;
}

.tray time {
  margin: 0 9px 0 5px;
  font-size: 11px;
  line-height: 18px;
  text-align: center;
}

.notes {
  position: relative;
  width: 25px;
}

.notes em {
  left: 5px;
  top: 5px;
  background: #444;
}
```
